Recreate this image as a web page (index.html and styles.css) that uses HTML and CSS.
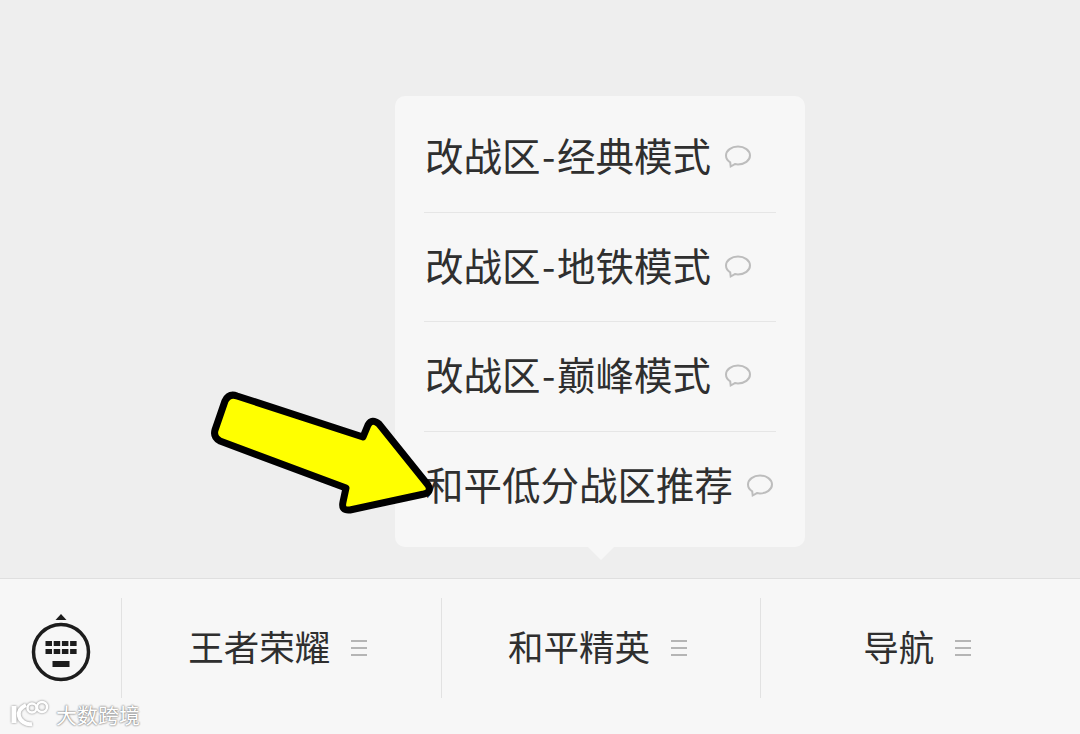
FILE: index.html
```html
<!DOCTYPE html>
<html lang="en">
<head>
    <meta charset="UTF-8">
    <meta name="viewport" content="width=device-width, initial-scale=1.0">
    <title>和平精英</title>
    <link rel="stylesheet" href="styles.css">
</head>
<body>
    <div class="chat-area">
        <!-- Sub menu of the middle tab -->
        <div class="menu">
            <div class="menu-item">
                <span>改战区<b class="dash">-</b>经典模式</span>
                <svg class="bubble" viewBox="0 0 28 26"><path d="M14 2.500C7.500 2.500 2 6.500 2 11.500c0 2.800 1.600 5.200 4.200 6.800l.5 4.200 4.200-2.400c1 .2 2 .3 3.100.3 6.500 0 12-3.900 12-8.900S20.500 2.500 14 2.500z"/></svg>
            </div>
            <div class="menu-item">
                <span>改战区<b class="dash">-</b>地铁模式</span>
                <svg class="bubble" viewBox="0 0 28 26"><path d="M14 2.500C7.500 2.500 2 6.500 2 11.500c0 2.800 1.600 5.200 4.200 6.800l.5 4.200 4.200-2.400c1 .2 2 .3 3.100.3 6.500 0 12-3.900 12-8.900S20.500 2.500 14 2.500z"/></svg>
            </div>
            <div class="menu-item">
                <span>改战区<b class="dash">-</b>巅峰模式</span>
                <svg class="bubble" viewBox="0 0 28 26"><path d="M14 2.500C7.500 2.500 2 6.500 2 11.500c0 2.800 1.600 5.200 4.200 6.800l.5 4.200 4.200-2.400c1 .2 2 .3 3.100.3 6.500 0 12-3.900 12-8.900S20.500 2.500 14 2.500z"/></svg>
            </div>
            <div class="menu-item">
                <span>和平低分战区推荐</span>
                <svg class="bubble" viewBox="0 0 28 26"><path d="M14 2.500C7.500 2.500 2 6.500 2 11.500c0 2.800 1.600 5.200 4.200 6.800l.5 4.200 4.200-2.400c1 .2 2 .3 3.100.3 6.500 0 12-3.900 12-8.900S20.500 2.500 14 2.500z"/></svg>
            </div>
        </div>

        <!-- Yellow arrow drawn on top of the screenshot -->
        <svg class="arrow" viewBox="0 0 240 140">
            <path d="M30 8 L156 49 L161 37 Q165 30 172 36 L221 97 Q225 104 217 106 L143 122 Q134 123 136 114 L139 100 L13 53 Q6 49 8 42 L18 13 Q22 5 30 8 Z"/>
        </svg>
    </div>

    <div class="tab-bar">
        <div class="keyboard-cell">
            <svg class="keyboard" viewBox="0 0 60 68">
                <path class="kb-tip" d="M30 0l5.500 6h-11z"/>
                <circle class="kb-ring" cx="30" cy="38" r="27.500"/>
                <g class="kb-keys">
                    <rect x="14.500" y="27" width="6.500" height="5"/><rect x="22.700" y="27" width="6.500" height="5"/><rect x="30.900" y="27" width="6.500" height="5"/><rect x="39.100" y="27" width="6.500" height="5"/>
                    <rect x="14.500" y="35" width="6.500" height="5"/><rect x="22.700" y="35" width="6.500" height="5"/><rect x="30.900" y="35" width="6.500" height="5"/><rect x="39.100" y="35" width="6.500" height="5"/>
                    <rect x="21.500" y="47" width="17" height="6"/>
                </g>
            </svg>
        </div>
        <div class="tab"><span>王者荣耀</span><i class="tab-lines"></i></div>
        <div class="tab"><span>和平精英</span><i class="tab-lines"></i></div>
        <div class="tab"><span>导航</span><i class="tab-lines"></i></div>
    </div>

    <!-- Watermark -->
    <div class="watermark">
        <svg class="wm-logo" viewBox="0 0 40 28">
            <path class="wm-stem" d="M5 6v17"/>
            <path class="wm-curve" d="M17 5C11 8 9 12 10 16c1 5 7 9 13 8"/>
            <circle cx="23" cy="8" r="4.500"/>
            <circle cx="33" cy="7" r="5"/>
        </svg>
        <span>大数跨境</span>
    </div>
</body>
</html>
```

FILE: styles.css
```css
body {
    margin: 0;
    width: 1080px;
    height: 734px;
    overflow: hidden;
    position: relative;
    display: flex;
    flex-direction: column;
    background: #eeeeee;
    font-family: "Noto Sans CJK SC", "Liberation Sans", sans-serif;
    color: #2f2f2f;
}

.chat-area {
    position: relative;
    height: 578px;
    background: #eeeeee;
}

.menu {
    position: absolute;
    left: 395px;
    top: 96px;
    width: 410px;
    height: 451px;
    box-sizing: border-box;
    padding: 7px 29px 0;
    background: #f7f7f7;
    border-radius: 10px;
}

/* little notch under the menu */
.menu:after {
    content: "";
    position: absolute;
    left: 193px;
    bottom: -13px;
    border-left: 13px solid transparent;
    border-right: 13px solid transparent;
    border-top: 13px solid #f7f7f7;
}

.menu-item {
    display: flex;
    align-items: center;
    height: 109.5px;
    box-sizing: border-box;
    border-bottom: 1px solid #e6e6e6;
    font-size: 38.5px;
    line-height: 1;
    padding: 0 0 6px 1px;
    white-space: nowrap;
}

.menu-item:last-child {
    border-bottom: none;
}

.dash {
    font-weight: normal;
    margin: 0 1.5px;
}

.bubble {
    width: 28px;
    height: 26px;
    margin-left: 13px;
    margin-top: 6px;
    fill: none;
    stroke: #bdbdbd;
    stroke-width: 2;
}

.arrow {
    position: absolute;
    left: 207px;
    top: 388px;
    width: 240px;
    height: 140px;
    overflow: visible;
}

.arrow path {
    fill: #ffff00;
    stroke: #000;
    stroke-width: 7;
    stroke-linejoin: round;
}

.tab-bar {
    display: flex;
    height: 156px;
    box-sizing: border-box;
    padding: 19px 0 36px;
    background: #f7f7f7;
    border-top: 1px solid #dfdfdf;
}

.keyboard-cell {
    width: 121px;
    display: flex;
    justify-content: center;
    align-items: center;
    flex: none;
}

.keyboard {
    width: 60px;
    height: 68px;
    margin-top: -1px;
}

.kb-tip, .kb-keys {
    fill: #1d1d1d;
}

.kb-ring {
    fill: none;
    stroke: #1d1d1d;
    stroke-width: 3.5;
}

.tab {
    flex: 1;
    display: flex;
    justify-content: center;
    align-items: center;
    gap: 21px;
    border-left: 1px solid #e2e2e2;
    font-size: 35.5px;
    padding-right: 7px;
}

.tab span {
    padding-bottom: 6px;
}

.tab-lines {
    width: 16px;
    height: 16px;
    box-sizing: border-box;
    border-top: 2px solid #b5b5b5;
    border-bottom: 2px solid #b5b5b5;
    background: linear-gradient(#b5b5b5, #b5b5b5) center / 100% 2px no-repeat;
}

.watermark {
    position: absolute;
    left: 9px;
    top: 699px;
    display: flex;
    align-items: center;
    gap: 7px;
    color: #fff;
    font-size: 21px;
    line-height: 30px;
    text-shadow: 0 0 2px #808080, 0 0 2px #808080;
}

.wm-logo {
    width: 40px;
    height: 28px;
    fill: none;
    stroke: #fff;
    stroke-width: 2.500;
    filter: drop-shadow(0 0 1px #808080);
}

.wm-stem {
    stroke-width: 5;
}

.wm-curve {
    stroke-width: 4;
}
```
